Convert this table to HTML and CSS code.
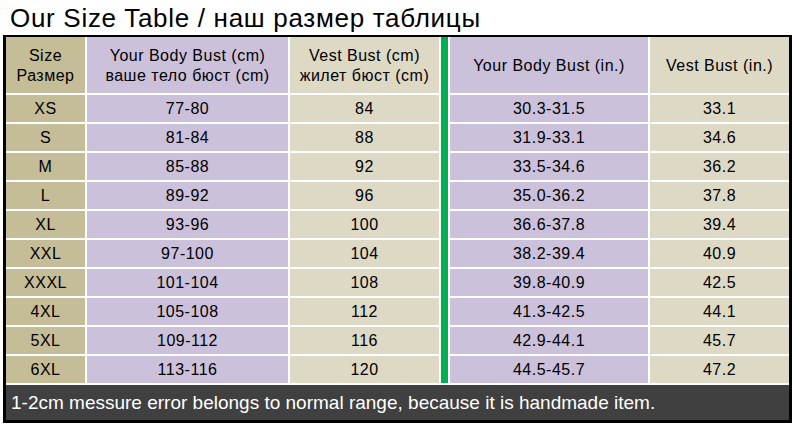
FILE: index.html
```html
<!DOCTYPE html>
<html>
<head>
<meta charset="utf-8">
<link rel="stylesheet" href="styles.css">
</head>
<body>
<h1 class="title">Our Size Table / наш размер таблицы</h1>
<div class="table">
  <div class="grid">
    <div class="cell size head">Size<br>Размер</div>
    <div class="cell purple head">Your Body Bust (cm)<br>ваше тело бюст (cm)</div>
    <div class="cell tan head">Vest Bust (cm)<br>жилет бюст (cm)</div>
    <div class="divider"></div>
    <div class="cell purple head">Your Body Bust (in.)</div>
    <div class="cell tan head">Vest Bust (in.)</div>

    <div class="cell size">XS</div><div class="cell purple">77-80</div><div class="cell tan">84</div><div class="cell purple">30.3-31.5</div><div class="cell tan">33.1</div>
    <div class="cell size">S</div><div class="cell purple">81-84</div><div class="cell tan">88</div><div class="cell purple">31.9-33.1</div><div class="cell tan">34.6</div>
    <div class="cell size">M</div><div class="cell purple">85-88</div><div class="cell tan">92</div><div class="cell purple">33.5-34.6</div><div class="cell tan">36.2</div>
    <div class="cell size">L</div><div class="cell purple">89-92</div><div class="cell tan">96</div><div class="cell purple">35.0-36.2</div><div class="cell tan">37.8</div>
    <div class="cell size">XL</div><div class="cell purple">93-96</div><div class="cell tan">100</div><div class="cell purple">36.6-37.8</div><div class="cell tan">39.4</div>
    <div class="cell size">XXL</div><div class="cell purple">97-100</div><div class="cell tan">104</div><div class="cell purple">38.2-39.4</div><div class="cell tan">40.9</div>
    <div class="cell size">XXXL</div><div class="cell purple">101-104</div><div class="cell tan">108</div><div class="cell purple">39.8-40.9</div><div class="cell tan">42.5</div>
    <div class="cell size">4XL</div><div class="cell purple">105-108</div><div class="cell tan">112</div><div class="cell purple">41.3-42.5</div><div class="cell tan">44.1</div>
    <div class="cell size">5XL</div><div class="cell purple">109-112</div><div class="cell tan">116</div><div class="cell purple">42.9-44.1</div><div class="cell tan">45.7</div>
    <div class="cell size">6XL</div><div class="cell purple">113-116</div><div class="cell tan">120</div><div class="cell purple">44.5-45.7</div><div class="cell tan">47.2</div>
  </div>
  <div class="footer">1-2cm messure error belongs to normal range, because it is handmade item.</div>
</div>
</body>
</html>
```

FILE: styles.css
```css
html, body {
  margin: 0;
  padding: 0;
  background: #ffffff;
}
body {
  font-family: "Liberation Sans", Arial, sans-serif;
  color: #000;
}
.title {
  margin: 0;
  padding: 2px 0 0 10px;
  height: 33px;
  line-height: 33px;
  font-size: 26px;
  letter-spacing: 0.7px;
  font-weight: normal;
  white-space: nowrap;
}
.table {
  margin-left: 3px;
  width: 783px;
  border: 3px solid #000;
  border-top-width: 2px;
  background: #ffffff;
}
.grid {
  display: grid;
  grid-template-columns: 79px 201px 149px 7px 198px 139px;
  grid-template-rows: 56px repeat(10, 27px);
  column-gap: 2px;
  row-gap: 2px;
  background: #ffffff;
}
.cell {
  display: flex;
  align-items: center;
  justify-content: center;
  text-align: center;
  font-size: 16px;
  letter-spacing: 0.5px;
  line-height: 20px;
}
.head {
  padding-top: 1px;
}
.size { background: #c4bd97; grid-column: 1; }
.purple { background: #ccc1da; }
.tan { background: #ddd9c4; }
.divider {
  grid-column: 4;
  grid-row: 1 / span 11;
  background: #00b050;
}
.footer {
  margin-top: 2px;
  height: 35px;
  background: #404040;
  color: #ffffff;
  font-size: 19px;
  line-height: 35px;
  padding-left: 5px;
  white-space: nowrap;
}
```
